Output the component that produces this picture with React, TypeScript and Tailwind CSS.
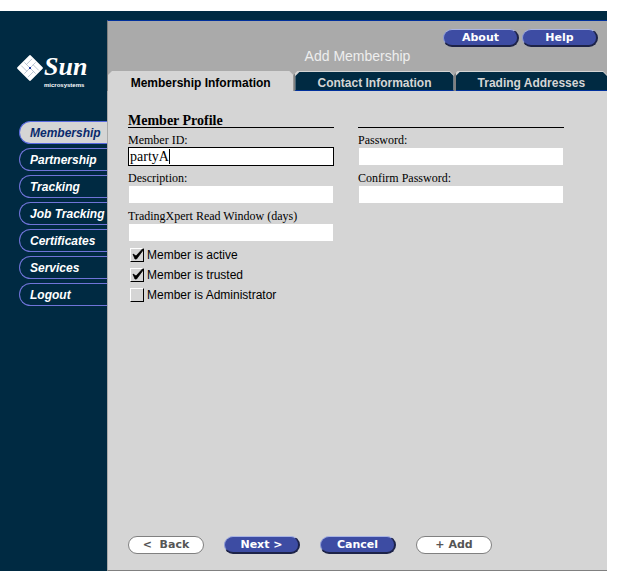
import { useState } from 'react'

const navItems = ['Membership', 'Partnership', 'Tracking', 'Job Tracking', 'Certificates', 'Services', 'Logout']
const tabs = ['Membership Information', 'Contact Information', 'Trading Addresses']

function SunLogo() {
  return (
    <div className="flex items-start gap-px" role="img" aria-label="Sun microsystems">
      <svg width="26" height="28" viewBox="-13 -14 26 28" className="mt-0.5 shrink-0">
        <g transform="rotate(45)">
          <rect x="-9.5" y="-9.5" width="19" height="19" rx="1.5" fill="#fff" />
          <path
            d="M-5 -8 V0 M0 -8 V-1 M0 -4.5 H8 M1 0 H8 M5 0 V8 M0 1 V8 M-8 4.5 H0 M-8 0 H-1"
            stroke="#93a4b8"
            strokeWidth="0.6"
          />
        </g>
        <rect x="-1" y="-1" width="2" height="2" fill="#1c39a0" />
      </svg>
      <div className="flex flex-col text-white">
        <span className="font-['Liberation_Serif',serif] text-[26px] leading-[30px] font-bold italic">Sun</span>
        <span className="font-['Liberation_Sans',sans-serif] text-[6px] leading-[7px] font-bold">microsystems</span>
      </div>
    </div>
  )
}

function PillButton({ label, light = false }: { label: string; light?: boolean }) {
  return (
    <button
      type="button"
      className={
        light
          ? "h-[18px] w-[76px] rounded-full border border-[#808080] bg-white font-['DejaVu_Sans',sans-serif] text-[11px] leading-4 font-bold whitespace-pre text-[#555]"
          : "h-[18px] w-[76px] rounded-full border-t border-r-2 border-b-2 border-l border-t-[#a9b4e4] border-r-[#1d2348] border-b-[#1d2348] border-l-[#8f9cd6] bg-[#3d4ca3] font-['DejaVu_Sans',sans-serif] text-[11px] leading-[14px] font-bold whitespace-pre text-white"
      }
    >
      {label}
    </button>
  )
}

function Field({ id, label, type = 'text', value = '', focused = false }: {
  id: string
  label: string
  type?: string
  value?: string
  focused?: boolean
}) {
  const [text, setText] = useState(value)
  return (
    <div>
      <label htmlFor={id} className="block pt-1.5 text-[12px] leading-[13px]">{label}</label>
      <div className={focused ? 'flex h-[19px] border border-black bg-white' : 'flex h-[19px] border border-[#d5d5d5] bg-white'}>
        <input
          id={id}
          type={type}
          value={text}
          onChange={(e) => setText(e.target.value)}
          className={
            focused
              ? 'field-sizing-content max-w-full min-w-0 bg-transparent pt-px pl-px text-[14px] leading-4 caret-transparent outline-none'
              : 'w-full min-w-0 bg-transparent px-px pt-px text-[14px] leading-4 outline-none'
          }
        />
        {/* text cursor */}
        {focused && <span className="my-px w-px bg-black" />}
      </div>
    </div>
  )
}

function CheckRow({ id, label, on = false }: { id: string; label: string; on?: boolean }) {
  return (
    <div className="flex h-5 items-center gap-[3px] pl-0.5">
      <span className="relative flex">
        <input
          id={id}
          type="checkbox"
          defaultChecked={on}
          className="peer size-[14px] appearance-none border border-t-white border-r-black border-b-black border-l-white bg-[#d5d5d5]"
        />
        <svg viewBox="0 0 14 14" className="pointer-events-none absolute inset-0 hidden size-[14px] peer-checked:block">
          <path d="M3 6 L6 8 L12.5 1 L13.5 1.5 L6.5 11 L5 11 Z" fill="#000" stroke="#000" strokeWidth="0.8" />
        </svg>
      </span>
      <label htmlFor={id} className="font-['Liberation_Sans',sans-serif] text-[12px] leading-5">{label}</label>
    </div>
  )
}

export default function App() {
  const [activeNav, setActiveNav] = useState('Membership')
  const [activeTab, setActiveTab] = useState(tabs[0])

  return (
    <div className="flex min-h-screen flex-col bg-white pt-[11px] pr-3 pb-[7px] font-['Liberation_Sans',sans-serif] text-black">
      <div className="flex flex-1 bg-[#002a42]">
        {/* Sidebar */}
        <aside className="w-[107px] shrink-0 pt-[41px]">
          <div className="pl-[17px]">
            <SunLogo />
          </div>
          <nav className="mt-8 flex flex-col gap-1 pl-[19px]">
            {navItems.map((item) => (
              <a
                key={item}
                href="#"
                onClick={() => setActiveNav(item)}
                className={
                  item === activeNav
                    ? 'flex h-[23px] items-center rounded-l-full border border-r-0 border-[#5a6ae0] bg-[#d5d5d5] pl-2.5 text-[12px] font-bold whitespace-nowrap text-[#0a2a6c] italic'
                    : 'flex h-[23px] items-center rounded-l-full border border-r-0 border-[#6f74d8] pl-2.5 text-[12px] font-bold whitespace-nowrap text-white italic'
                }
              >
                {item}
              </a>
            ))}
          </nav>
        </aside>

        <div className="flex min-w-0 flex-1 flex-col pt-[9px]">
          {/* Header */}
          <header className="border-t border-l border-t-[#00309c] border-l-[#808080] bg-[#aaa]">
            <div className="flex justify-end gap-[3px] pt-2 pr-[9px]">
              <PillButton label="About" />
              <PillButton label="Help" />
            </div>
            <h1 className="pt-px pb-[7px] text-center text-[14px] leading-4 text-[#eee]">Add Membership</h1>
            <div className="grid grid-cols-[185fr_160fr_153fr]">
              {tabs.map((tab) => (
                <button
                  key={tab}
                  type="button"
                  onClick={() => setActiveTab(tab)}
                  className={
                    tab === activeTab
                      ? 'h-5 bg-[#d5d5d5] pt-[3px] text-[12px] leading-4 font-bold whitespace-nowrap text-black [clip-path:polygon(0_4px,4px_0,calc(100%-4px)_0,100%_4px,100%_100%,0_100%)]'
                      : 'h-5 border-l-2 border-l-[#808080] bg-[#d5d5d5] pt-px text-[12px] leading-4 font-bold whitespace-nowrap text-[#d5d5d5] [clip-path:polygon(0_4px,4px_0,calc(100%-4px)_0,100%_4px,100%_100%,0_100%)]'
                  }
                >
                  {tab === activeTab ? (
                    tab
                  ) : (
                    <span className="flex h-full items-center justify-center border-b border-[#00309c] bg-[#002a42] pt-[3px] [clip-path:polygon(0_4px,4px_0,calc(100%-4px)_0,100%_4px,100%_100%,0_100%)]">
                      {tab}
                    </span>
                  )}
                </button>
              ))}
            </div>
          </header>

          {/* Form */}
          <form className="flex flex-1 flex-col border-b border-l border-b-[#808080] border-l-[#aaa] bg-[#d5d5d5] pt-[22px] pr-[43px] pb-4 pl-5 font-['Liberation_Serif',serif]">
            <div className="grid grid-cols-2 gap-x-6">
              <h2 className="h-[15px] border-b border-black text-[14px] leading-[15px] font-bold">Member Profile</h2>
              <div className="h-[15px] border-b border-black" />
              <Field id="member-id" label="Member ID:" value="partyA" focused />
              <Field id="password" label="Password:" type="password" />
              <Field id="description" label="Description:" />
              <Field id="confirm" label="Confirm Password:" type="password" />
              <Field id="window" label="TradingXpert Read Window (days)" />
            </div>
            <div className="pt-[3px]">
              <CheckRow id="active" label="Member is active" on />
              <CheckRow id="trusted" label="Member is trusted" on />
              <CheckRow id="admin" label="Member is Administrator" />
            </div>
            <div className="mt-auto flex flex-wrap gap-5 pt-6">
              <PillButton label="<  Back" light />
              <PillButton label="Next >" />
              <PillButton label="Cancel" />
              <PillButton label="+ Add" light />
            </div>
          </form>
        </div>
      </div>
    </div>
  )
}
